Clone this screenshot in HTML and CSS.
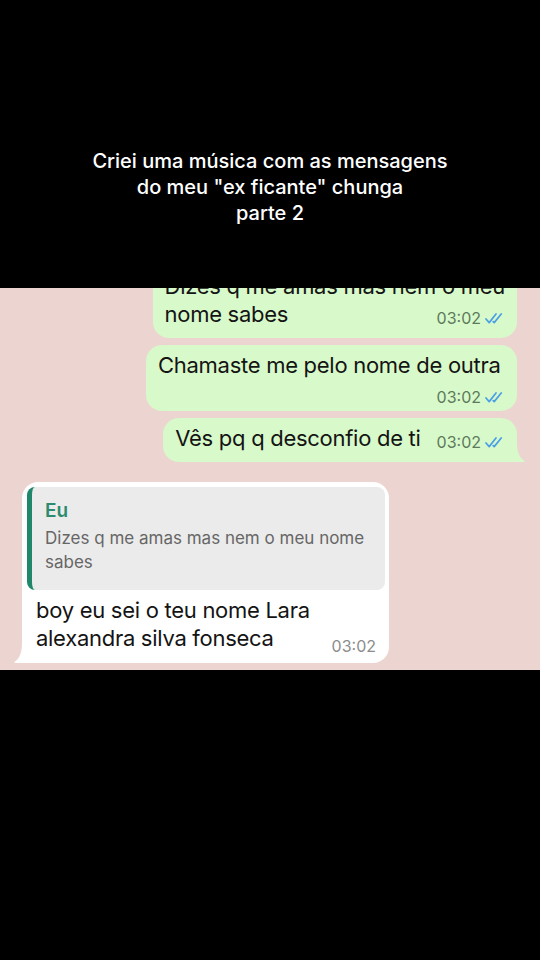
FILE: index.html
```html
<!DOCTYPE html>
<html lang="pt">
<head>
  <meta charset="UTF-8">
  <title>chat</title>
  <link rel="stylesheet" href="styles.css">
</head>
<body>
  <div id="screen">
    <header class="caption">
      Criei uma música com as mensagens<br>
      do meu "ex ficante" chunga<br>
      parte 2
    </header>

    <div class="chat">
      <div class="bubble out">
        <p class="text">Dizes q me amas mas nem o meu<br>nome sabes<span class="meta">03:02
          <svg class="ticks" viewBox="0 0 20 11"><path d="M1 6 L4.2 9.6 L11 1" /><path d="M8.2 8.6 L9.2 9.6 L16.2 1" /></svg></span></p>
      </div>
      <div class="bubble out">
        <p class="text">Chamaste me pelo nome de outra<span class="meta">03:02
          <svg class="ticks" viewBox="0 0 20 11"><path d="M1 6 L4.2 9.6 L11 1" /><path d="M8.2 8.6 L9.2 9.6 L16.2 1" /></svg></span></p>
      </div>
      <div class="bubble out last">
        <p class="text">Vês pq q desconfio de ti<span class="meta">03:02
          <svg class="ticks" viewBox="0 0 20 11"><path d="M1 6 L4.2 9.6 L11 1" /><path d="M8.2 8.6 L9.2 9.6 L16.2 1" /></svg></span></p>
        <svg class="tail" viewBox="0 0 18 20"><path d="M0 0 H10 C10 9 12 15 17 18.6 C18 19.3 17.6 20 16.4 20 H0 Z" /></svg>
      </div>

      <div class="bubble in last">
        <div class="quote">
          <div class="quote-name">Eu</div>
          <div class="quote-text">Dizes q me amas mas nem o meu nome sabes</div>
        </div>
        <p class="text">boy eu sei o teu nome Lara<br>alexandra silva fonseca<span class="meta">03:02</span></p>
        <svg class="tail" viewBox="0 0 18 20"><path d="M0 0 H10 C10 9 12 15 17 18.6 C18 19.3 17.6 20 16.4 20 H0 Z" /></svg>
      </div>
    </div>
  </div>
</body>
</html>
```

FILE: styles.css
```css
body{
  margin: 0;
  background: #000;
  font-family: Inter, "Noto Sans", sans-serif;
}
#screen{
  width: 540px;
  height: 960px;
  background: #000;
}
.caption{
  box-sizing: border-box;
  height: 288px;
  padding-top: 148px;
  color: #fff;
  text-align: center;
  font-size: 20px;
  line-height: 26px;
  font-weight: 500;
}
.chat{
  box-sizing: border-box;
  height: 382px;
  padding-bottom: 7px;
  background: #ecd5d1;
  display: flex;
  flex-direction: column;
  justify-content: flex-end;
  overflow: hidden;
}
.bubble{
  position: relative;
  box-sizing: border-box;
  display: flow-root;
  border-radius: 16px;
  font-size: 22px;
  line-height: 28px;
  color: #141414;
}
.text{
  margin: 0;
  letter-spacing: -0.28px;
}
.out{
  align-self: flex-end;
  max-width: 371px;
  margin-right: 23px;
  padding: 6px 12px 10px;
  background: #d8f9c9;
}
.out + .out{
  margin-top: 7px;
}
.in{
  align-self: flex-start;
  max-width: 367px;
  margin: 20px 0 0 22px;
  padding: 5px 4px 11px 5px;
  background: #fff;
}
.out.last{
  border-bottom-right-radius: 4px;
}
.in.last{
  border-bottom-left-radius: 4px;
}
.tail{
  position: absolute;
  bottom: 0;
  width: 18px;
  height: 20px;
}
.out .tail{
  right: -8px;
  fill: #d8f9c9;
}
.in .tail{
  left: -8px;
  fill: #fff;
  transform: scaleX(-1);
}
.meta{
  float: right;
  display: flex;
  align-items: center;
  gap: 4px;
  margin: 11px 0 -3px 16px;
  font-size: 16px;
  line-height: 14px;
  letter-spacing: 0;
  color: #5d7a5d;
}
.ticks{
  width: 20px;
  height: 11px;
  fill: none;
  stroke: #4a9fe6;
  stroke-width: 1.7;
  stroke-linecap: round;
  stroke-linejoin: round;
}
.quote{
  border-left: 5px solid #21876a;
  border-radius: 8px;
  padding: 12px 12px 16px 13px;
  background: #ebebeb;
}
.quote-name{
  font-size: 19px;
  line-height: 24px;
  font-weight: 600;
  color: #2d8b6d;
}
.quote-text{
  margin-top: 3px;
  font-size: 17px;
  line-height: 24px;
  color: #666;
}
.in .text{
  padding: 6px 9px 0 9px;
}
.in .meta{
  margin-top: 15px;
  margin-bottom: -4px;
  color: #8c8c8c;
}
```
